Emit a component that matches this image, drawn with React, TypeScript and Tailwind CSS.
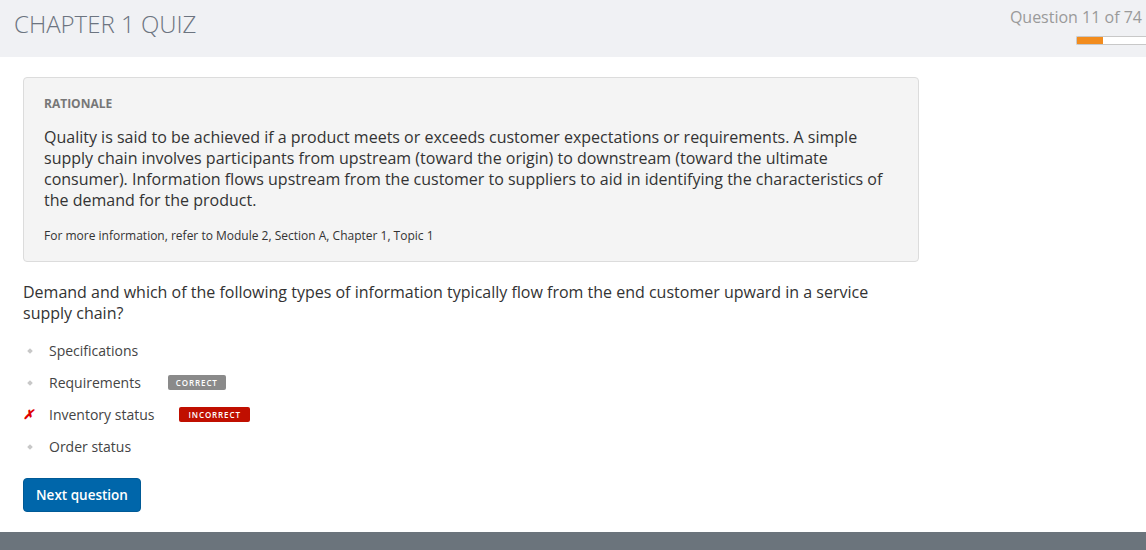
export default function App() {
  const options = [
    { label: "Specifications", mark: "none" },
    { label: "Requirements", mark: "correct" },
    { label: "Inventory status", mark: "incorrect" },
    { label: "Order status", mark: "none" },
  ];

  return (
    <div className="w-full min-h-[550px] bg-white flex flex-col text-[#333]" style={{ fontFamily: '"Open Sans", sans-serif' }}>
      {/* header */}
      <div className="h-[57px] bg-[#f0f1f4] flex justify-between items-start">
        <h1 className="pl-[14px] pt-[8px] text-[24px] font-light text-[#6c7480] leading-[32px]">CHAPTER 1 QUIZ</h1>
        <div className="flex flex-col items-end pt-[6px]">
          <div className="text-[16px] text-[#9a9a9a] leading-[22px] pr-[4px]">Question 11 of 74</div>
          <div className="mt-[8px] w-[70px] h-[9px] bg-white border border-[#c8c8c8] border-r-0 rounded-l-[2px] flex">
            <div className="w-[26px] h-full bg-[#f28c1e]" />
          </div>
        </div>
      </div>

      {/* content */}
      <div className="flex-1 pl-[23px] pt-[20px]">
        <div className="w-[896px] bg-[#f4f4f4] border border-[#dcdcdc] rounded-[4px] pl-[20px] pr-[20px] pt-[16px] pb-[16px]">
          <div className="text-[12px] font-bold text-[#777] leading-[20px]">RATIONALE</div>
          <p className="mt-[13px] text-[16px] leading-[21px] text-[#333] pr-[10px]">
            Quality is said to be achieved if a product meets or exceeds customer expectations or requirements. A simple supply chain involves participants from upstream (toward the origin) to downstream (toward the ultimate consumer). Information flows upstream from the customer to suppliers to aid in identifying the characteristics of the demand for the product.
          </p>
          <p className="mt-[16px] text-[12px] leading-[18px] text-[#333]">
            For more information, refer to Module 2, Section A, Chapter 1, Topic 1
          </p>
        </div>

        <p className="mt-[20px] w-[870px] text-[16px] leading-[21px] text-[#333]">
          Demand and which of the following types of information typically flow from the end customer upward in a service supply chain?
        </p>

        <ul className="mt-[16px] flex flex-col gap-[11px]">
          {options.map((o) => (
            <li key={o.label} className="flex items-center h-[21px]">
              <span className="w-[26px] flex justify-start pl-[5px]">
                {o.mark === "incorrect" ? (
                  <span className="text-[#e00000] text-[13px] font-bold italic leading-none -ml-[5px]">✗</span>
                ) : (
                  <span className="w-[4px] h-[4px] bg-[#c8c8c8] rotate-45" />
                )}
              </span>
              <span className="text-[14px] text-[#444] leading-[21px]">{o.label}</span>
              {o.mark === "correct" && (
                <span className="ml-[27px] h-[15px] px-[8px] bg-[#8a8a8a] text-white text-[8px] font-semibold tracking-[0.9px] leading-[15px] rounded-[2px]">CORRECT</span>
              )}
              {o.mark === "incorrect" && (
                <span className="ml-[25px] h-[15px] px-[9px] bg-[#c00f00] text-white text-[8px] font-semibold tracking-[0.9px] leading-[15px] rounded-[2px]">INCORRECT</span>
              )}
            </li>
          ))}
        </ul>

        <button className="mt-[21px] w-[118px] h-[34px] bg-[#0066aa] border border-[#005a96] rounded-[4px] text-white text-[13.5px] font-semibold">
          Next question
        </button>
      </div>

      {/* footer */}
      <div className="h-[18px] bg-[#6b747c] mt-[20px]" />
    </div>
  );
}
